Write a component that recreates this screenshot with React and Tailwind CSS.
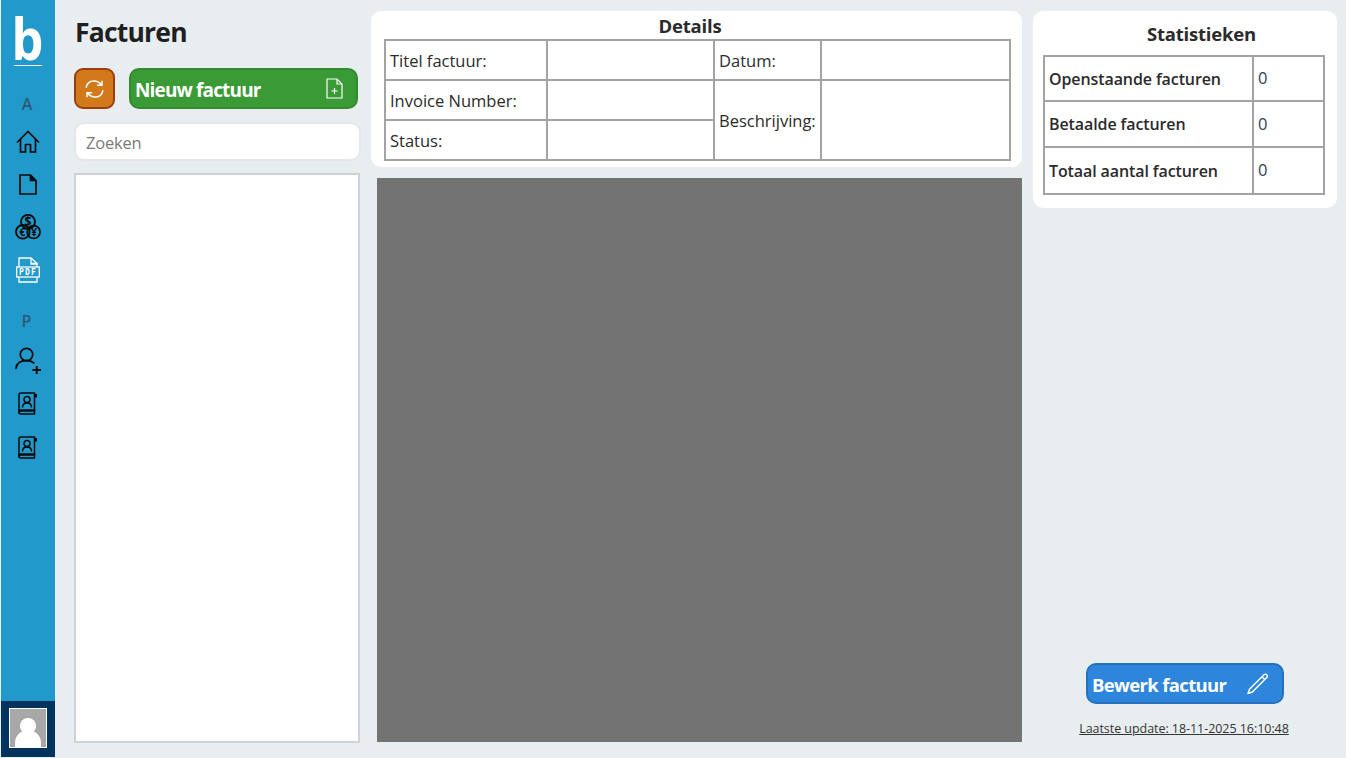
import React from "react";

const font = { fontFamily: '"Open Sans", "Noto Sans", sans-serif' };

function HouseIcon() {
  return (
    <svg width="24" height="24" viewBox="0 0 24 24" fill="none" stroke="#0a0a0a" strokeWidth="1.7" strokeLinejoin="round" strokeLinecap="round">
      <path d="M1.500 12 12 1.500 22.500 12" />
      <path d="M4.500 9.500V22H9.500V14.500H14.500V22H19.500V9.500" />
    </svg>
  );
}
function FileIcon() {
  return (
    <svg width="18" height="21" viewBox="0 0 18 21" fill="none" stroke="#0a0a0a" strokeWidth="1.7" strokeLinejoin="miter">
      <path d="M1 1H11.500L17 6.500V20H1Z" />
      <path d="M11.500 1V6.500H17" fill="#0a0a0a" />
    </svg>
  );
}
function CoinsIcon() {
  return (
    <svg width="26" height="26" viewBox="0 0 26 26" fill="none" stroke="#0a0a0a" strokeWidth="1.800">
      <circle cx="13" cy="7.800" r="7" />
      <circle cx="7.800" cy="17.800" r="6.800" />
      <circle cx="18.600" cy="18" r="6.400" />
      <text x="13" y="12.300" textAnchor="middle" fontSize="12" fontWeight="700" fill="#0a0a0a" stroke="none" fontFamily="Open Sans">$</text>
      <text x="7.500" y="21.700" textAnchor="middle" fontSize="11" fontWeight="700" fill="#0a0a0a" stroke="none" fontFamily="Open Sans">€</text>
      <text x="19" y="22" textAnchor="middle" fontSize="10.500" fontWeight="700" fill="#0a0a0a" stroke="none" fontFamily="Open Sans">¥</text>
    </svg>
  );
}
function PdfIcon() {
  return (
    <svg width="24" height="26" viewBox="0 0 24 26" fill="none" stroke="#ffffff" strokeWidth="1.300">
      <path d="M3 10V1H15L21 6.500V10" />
      <path d="M15 1V6.500H21V7H15Z" fill="#ffffff" />
      <rect x="0.700" y="10" width="22.600" height="10" />
      <path d="M3 20V25H21V20" />
      <text x="12" y="18" textAnchor="middle" fontSize="8" fontWeight="700" letterSpacing="1.200" fill="#ffffff" stroke="none" fontFamily="DejaVu Sans Mono">PDF</text>
    </svg>
  );
}
function PersonPlusIcon() {
  return (
    <svg width="27" height="28" viewBox="0 0 27 28" fill="none" stroke="#0a0a0a" strokeWidth="1.700" strokeLinecap="round">
      <circle cx="11.500" cy="7.500" r="6.200" />
      <path d="M1 21.500C1.500 16.500 5.500 13.700 11.500 13.700C14.500 13.700 17 14.500 18.800 16" />
      <path d="M17.500 23H26M21.700 19V27" strokeWidth="1.900" strokeLinecap="butt" />
    </svg>
  );
}
function BookIcon() {
  return (
    <svg width="20" height="23" viewBox="0 0 20 23" fill="none" stroke="#0a0a0a" strokeWidth="1.500" strokeLinejoin="round">
      <path d="M3 1H16.500V19H3C1.800 19 1 19.800 1 21V3C1 1.800 1.800 1 3 1Z" />
      <path d="M1 20C1 18.500 2 18 3 18H16.500V22H3C1.800 22 1 21 1 20Z" />
      <rect x="16.500" y="2" width="2.500" height="3.500" fill="#0a0a0a" stroke="none" />
      <circle cx="9" cy="7.500" r="3" />
      <path d="M4.500 15.500C4.500 12.500 6.500 11 9 11C11.500 11 13.500 12.500 13.500 15.500" />
    </svg>
  );
}
function RefreshIcon() {
  return (
    <svg width="21" height="20" viewBox="0 0 21 20" fill="none" stroke="#ffffff" strokeWidth="1.500" strokeLinecap="round" strokeLinejoin="round">
      <path d="M2.200 8.200C3 4.300 6.300 2 10 2C12.900 2 15.400 3.300 17.200 5.800" />
      <path d="M18.800 11.800C18 15.700 14.700 18 11 18C8.100 18 5.600 16.700 3.800 14.200" />
      <path d="M13.500 6.300H18V2.200" />
      <path d="M7.500 13.700H3V17.800" />
    </svg>
  );
}
function FilePlusIcon() {
  return (
    <svg width="17" height="21" viewBox="0 0 17 21" fill="none" stroke="#ffffff" strokeWidth="1.200">
      <path d="M1 1H11L16 6V20H1Z" />
      <path d="M11 1V6H16" />
      <path d="M5.500 13H11.500M8.500 10V16" />
    </svg>
  );
}
function PencilIcon() {
  return (
    <svg width="23" height="22" viewBox="0 0 23 22" fill="none" stroke="#ffffff" strokeWidth="1.500" strokeLinejoin="round">
      <path d="M18 1.800C18.800 1 20 1 20.700 1.800C21.500 2.600 21.500 3.700 20.800 4.500L6.300 19L2 20.500L3.500 16.300Z" />
      <path d="M16 3.800 18.800 6.600" />
    </svg>
  );
}

function NavIcon({ children, className }) {
  return <div className={`flex items-center justify-center w-full ${className}`}>{children}</div>;
}

function Sidebar() {
  return (
    <aside className="w-[54px] ml-px h-full bg-[#2299cb] flex flex-col items-center shrink-0">
      <div className="h-[67px] w-full flex flex-col items-center pr-[1px]">
        <span className="text-white font-bold text-[58px] leading-[75px] -mb-[10px] scale-x-[0.87]" style={font}>b</span>
        <div className="w-[28px] h-px bg-white" />
      </div>
      <div className="mt-[26px] pr-[2px] text-[16px] leading-[22px] font-semibold text-[#2c5a78]" style={font}>A</div>
      <NavIcon className="mt-[15px]"><HouseIcon /></NavIcon>
      <NavIcon className="mt-[20px]"><FileIcon /></NavIcon>
      <NavIcon className="mt-[19px]"><CoinsIcon /></NavIcon>
      <NavIcon className="mt-[17px]"><PdfIcon /></NavIcon>
      <div className="mt-[27px] pr-[3px] text-[16px] leading-[22px] font-semibold text-[#2c5a78]" style={font}>P</div>
      <NavIcon className="mt-[15px]"><PersonPlusIcon /></NavIcon>
      <NavIcon className="mt-[17px]"><BookIcon /></NavIcon>
      <NavIcon className="mt-[21px]"><BookIcon /></NavIcon>
      <div className="mt-auto w-full h-[56px] bg-[#03345e] flex items-center justify-center pb-[2px] pr-[1px]">
        <div className="w-[38px] h-[40px] border border-white bg-[#a8a8a8] relative overflow-hidden">
          <div className="absolute left-[10px] top-[9px] w-[16px] h-[16px] rounded-full bg-white" />
          <div className="absolute left-[5px] top-[21px] w-[26px] h-[30px] rounded-t-full bg-white" />
        </div>
      </div>
    </aside>
  );
}

function LeftColumn() {
  return (
    <section className="w-[287px] ml-[19px] h-full flex flex-col shrink-0">
      <h1 className="mt-[14px] pl-px text-[26.500px] leading-[36px] font-bold text-[#1f1f1f] tracking-[-0.8px]" style={font}>Facturen</h1>
      <div className="mt-[18px] flex gap-[14px]">
        <button className="w-[41px] h-[41px] rounded-[9px] bg-[#d27a1b] border-2 border-[#9c3d10] flex items-center justify-center">
          <RefreshIcon />
        </button>
        <button className="w-[229px] h-[41px] rounded-[10px] bg-[#3a9a35] border-2 border-[#338a30] flex items-center justify-between pl-[4px] pr-[13px] text-white">
          <span className="text-[19px] font-bold tracking-[-0.85px] pt-[3px]" style={font}>Nieuw factuur</span>
          <FilePlusIcon />
        </button>
      </div>
      <div className="mt-[13px] w-[287px] h-[39px] rounded-[10px] bg-white border-2 border-[#e4e7e9] flex items-center pl-[10px] pt-[3px] text-[16.500px] text-[#7a7a7a] tracking-[-0.2px]" style={font}>Zoeken</div>
      <div className="mt-[12px] w-[286px] h-[570px] bg-white border-2 border-[#d0d3d5]" />
    </section>
  );
}

const th = "border-2 border-[#a3a3a3] px-[4px] pt-[2px] text-left font-medium text-[16.500px] text-[#2b2b2b] align-middle";
const stat = "border-2 border-[#a3a3a3] px-[4px] text-left font-semibold text-[16px] tracking-[-0.1px] text-[#2b2b2b] align-middle";
const td = "border-2 border-[#a3a3a3]";

function Details() {
  return (
    <div className="h-[156px] bg-white rounded-[10px] flex flex-col items-center pl-[13px] pr-[11px]" style={font}>
      <h2 className="h-[28px] pr-[15px] text-[18.500px] leading-[30px] font-bold text-[#2b2b2b] tracking-[-0.2px]">Details</h2>
      <table className="w-[627px] h-[121px] border-collapse table-fixed">
        <colgroup>
          <col className="w-[162px]" />
          <col className="w-[167px]" />
          <col className="w-[107px]" />
          <col />
        </colgroup>
        <tbody>
          <tr className="h-[40px]">
            <td className={th}>Titel factuur:</td>
            <td className={td} />
            <td className={th}>Datum:</td>
            <td className={td} />
          </tr>
          <tr className="h-[40px]">
            <td className={th}>Invoice Number:</td>
            <td className={td} />
            <td className={th} rowSpan={2}>Beschrijving:</td>
            <td className={td} rowSpan={2} />
          </tr>
          <tr className="h-[40px]">
            <td className={th}>Status:</td>
            <td className={td} />
          </tr>
        </tbody>
      </table>
    </div>
  );
}

function Statistics() {
  const rows = [
    ["Openstaande facturen", "h-[45px]"],
    ["Betaalde facturen", "h-[46px]"],
    ["Totaal aantal facturen", "h-[47px]"],
  ];
  return (
    <div className="h-[197px] bg-white rounded-[10px] pl-[10px] pr-[12px]" style={font}>
      <h2 className="h-[44px] pt-[9px] text-center pl-[35px] text-[18.500px] leading-[28px] font-bold text-[#2b2b2b] tracking-[-0.2px]">Statistieken</h2>
      <table className="w-[282px] border-collapse table-fixed">
        <colgroup>
          <col className="w-[209px]" />
          <col />
        </colgroup>
        <tbody>
          {rows.map(([label, h]) => (
            <tr key={label} className={h}>
              <td className={stat}>{label}</td>
              <td className="border-2 border-[#a3a3a3] px-[4px] text-[16.500px] text-[#2f4358]">0</td>
            </tr>
          ))}
        </tbody>
      </table>
    </div>
  );
}

export default function App() {
  return (
    <div className="w-[1346px] h-[758px] bg-[#e8edf0] flex overflow-hidden pb-px">
      <Sidebar />
      <LeftColumn />
      <main className="w-[651px] ml-[10px] shrink-0 flex flex-col pt-[11px]">
        <Details />
        <div className="ml-[6px] mt-[11px] h-[564px] bg-[#737373]" />
      </main>
      <aside className="w-[304px] ml-[11px] shrink-0 flex flex-col pt-[11px]">
        <Statistics />
        <div className="mt-auto flex flex-col items-center pb-[18px]" style={font}>
          <button className="w-[198px] h-[41px] rounded-[10px] bg-[#2d86dc] border-2 border-[#2671bd] flex items-center justify-between pl-[4px] pr-[13px] text-white">
            <span className="text-[18.500px] font-bold tracking-[-0.65px] pt-[2px]">Bewerk factuur</span>
            <PencilIcon />
          </button>
          <span className="mt-[15px] pr-[2px] text-[12.500px] leading-[20px] underline text-[#333] tracking-[-0.05px]">Laatste update: 18-11-2025 16:10:48</span>
        </div>
      </aside>
    </div>
  );
}
